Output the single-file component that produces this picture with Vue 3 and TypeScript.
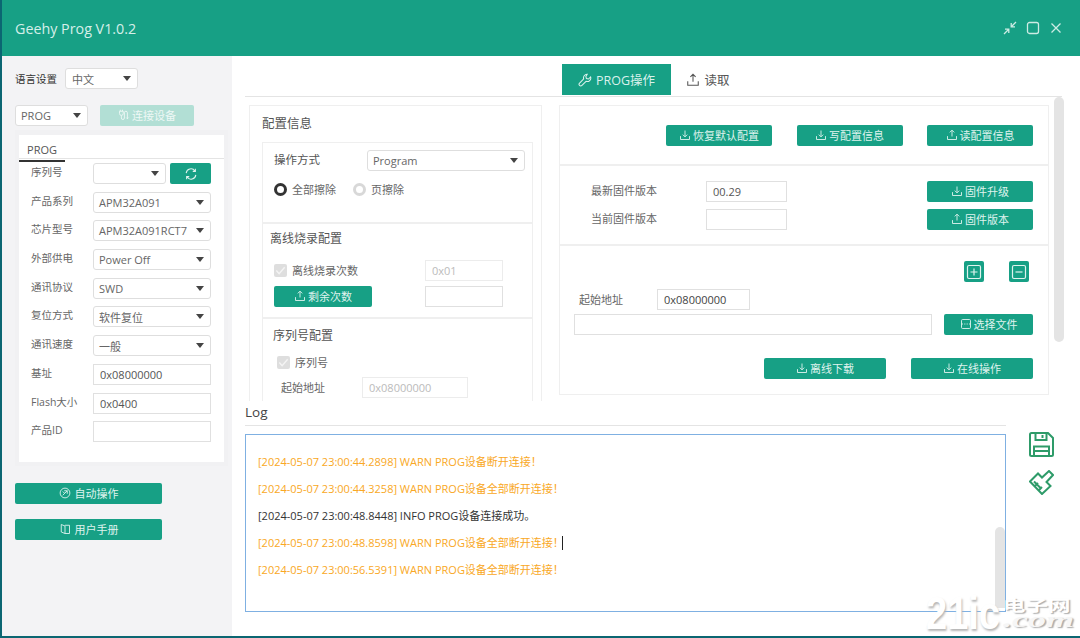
<script setup lang="ts">
const leftRows = [
  { label: '产品系列', value: 'APM32A091' },
  { label: '芯片型号', value: 'APM32A091RCT7' },
  { label: '外部供电', value: 'Power Off' },
  { label: '通讯协议', value: 'SWD' },
  { label: '复位方式', value: '软件复位' },
  { label: '通讯速度', value: '一般' },
]
const inputRows = [
  { label: '基址', value: '0x08000000' },
  { label: 'Flash大小', value: '0x0400' },
  { label: '产品ID', value: '' },
]
const logs = [
  { warn: true, text: '[2024-05-07 23:00:44.2898] WARN PROG设备断开连接！' },
  { warn: true, text: '[2024-05-07 23:00:44.3258] WARN PROG设备全部断开连接！' },
  { warn: false, text: '[2024-05-07 23:00:48.8448] INFO PROG设备连接成功。' },
  { warn: true, text: '[2024-05-07 23:00:48.8598] WARN PROG设备全部断开连接！', caret: true },
  { warn: true, text: '[2024-05-07 23:00:56.5391] WARN PROG设备全部断开连接！' },
]
</script>

<template>
  <div class="desk">
    <div class="win">
      <header class="titlebar">
        <span class="title">Geehy Prog V1.0.2</span>
        <div class="winctl">
          <svg width="14" height="14" viewBox="0 0 14 14"><path d="M13 1 8.5 5.5M8.2 2v3.800H12M1 13l4.500-4.500M5.800 12V8.200H2" /></svg>
          <svg width="14" height="14" viewBox="0 0 14 14"><rect x="1.500" y="1.500" width="11" height="11" rx="2" /></svg>
          <svg width="14" height="14" viewBox="0 0 14 14"><path d="M2.500 2.500l9 9M11.500 2.500l-9 9" /></svg>
        </div>
      </header>
      <div class="body">
        <aside class="side">
          <div class="langrow">
            <span class="langlabel">语言设置</span>
            <div class="sel lang"><span>中文</span><i class="arrow"></i></div>
          </div>
          <div class="devrow">
            <div class="sel dev"><span>PROG</span><i class="arrow"></i></div>
            <button class="btn connect">
              <svg class="ico" viewBox="0 0 16 16"><path d="M3 1v2M6 1v2M2 3h5v3a2.500 2.500 0 0 1-5 0zM4.500 8.500V12a2 2 0 0 0 4 0V5a2 2 0 0 1 4 0v8M12.500 13l-1.500-1.500M12.500 13l1.500-1.500" /></svg>
              连接设备
            </button>
          </div>
          <div class="progbox">
            <div class="progcard">
              <div class="progtabs"><span class="progtab">PROG</span></div>
              <div class="srow">
                <span class="slabel">序列号</span>
                <div class="sel short"><i class="arrow"></i></div>
                <button class="btn refresh">
                  <svg class="ico" viewBox="0 0 16 16"><path d="M2.500 7A5.500 5.500 0 0 1 12.500 4.500M13.500 9A5.500 5.500 0 0 1 3.500 11.500M13 2v3h-3M3 14v-3h3" /></svg>
                </button>
              </div>
              <div v-for="r in leftRows" :key="r.label" class="srow">
                <span class="slabel">{{ r.label }}</span>
                <div class="sel wide"><span>{{ r.value }}</span><i class="arrow"></i></div>
              </div>
              <div v-for="r in inputRows" :key="r.label" class="srow">
                <span class="slabel">{{ r.label }}</span>
                <div class="inp wide">{{ r.value }}</div>
              </div>
            </div>
          </div>
          <button class="btn sidebtn auto">
            <svg class="ico" viewBox="0 0 16 16"><circle cx="8" cy="8" r="6.500" /><path d="M5 11l6-6M7 5h4v4M5 6l2 2" /></svg>
            自动操作
          </button>
          <button class="btn sidebtn manual">
            <svg class="ico" viewBox="0 0 16 16"><path d="M8 4 3 2v10l5 2h6V3H8M8 4v10" /></svg>
            用户手册
          </button>
        </aside>
        <main class="main">
          <nav class="tabs">
            <div class="tab active">
              <svg class="ico tabico" viewBox="0 0 16 16"><path d="M10.500 1.500a4 4 0 0 0-4 5.300L1.800 11.500a1.900 1.900 0 0 0 2.700 2.700l4.700-4.700a4 4 0 0 0 5.200-5l-2.400 2.400-2.400-.6-.6-2.400z" /></svg>
              PROG操作
            </div>
            <div class="tab">
              <svg class="ico tabico" viewBox="0 0 16 16"><path d="M8 10V2M5 4.500 8 1.500l3 3M2 9.500V14h12V9.500" /></svg>
              读取
            </div>
          </nav>
          <div class="workarea">
            <section class="cfgcol">
              <div class="cfghead">配置信息</div>
              <div class="cfgbox first">
                <div class="oprow">
                  <span class="oplabel">操作方式</span>
                  <div class="sel program"><span>Program</span><i class="arrow"></i></div>
                </div>
                <div class="radios">
                  <span class="radio on"></span><span class="rtext">全部擦除</span>
                  <span class="radio off"></span><span class="rtext">页擦除</span>
                </div>
              </div>
              <div class="cfgbox second">
                <div class="subhead">离线烧录配置</div>
                <div class="offrow">
                  <span class="check"><svg viewBox="0 0 14 14"><path d="M2.500 7l3 3.500 6-7" /></svg></span>
                  <span class="rtext">离线烧录次数</span>
                  <div class="inp dim count">0x01</div>
                </div>
                <div class="offrow btnrow">
                  <button class="btn remain">
                    <svg class="ico" viewBox="0 0 16 16"><path d="M8 10V2M5 4.500 8 1.500l3 3M2 9.500V14h12V9.500" /></svg>
                    剩余次数
                  </button>
                  <div class="inp count"></div>
                </div>
              </div>
              <div class="cfgbox third">
                <div class="subhead indent">序列号配置</div>
                <div class="snrow">
                  <span class="check"><svg viewBox="0 0 14 14"><path d="M2.500 7l3 3.500 6-7" /></svg></span>
                  <span class="rtext">序列号</span>
                </div>
                <div class="startrow">
                  <span class="rtext">起始地址</span>
                  <div class="inp dim startinp">0x08000000</div>
                </div>
              </div>
            </section>
            <section class="opscol">
              <div class="opsblock a">
                <button class="btn b106">
                  <svg class="ico" viewBox="0 0 16 16"><path d="M8 2v8M5 7.500l3 3 3-3M2 9.500V14h12V9.500" /></svg>恢复默认配置
                </button>
                <button class="btn b106">
                  <svg class="ico" viewBox="0 0 16 16"><path d="M8 2v8M5 7.500l3 3 3-3M2 9.500V14h12V9.500" /></svg>写配置信息
                </button>
                <button class="btn b106">
                  <svg class="ico" viewBox="0 0 16 16"><path d="M8 10V2M5 4.500 8 1.500l3 3M2 9.500V14h12V9.500" /></svg>读配置信息
                </button>
              </div>
              <div class="opsblock b">
                <div class="fwrow">
                  <span class="fwlabel">最新固件版本</span>
                  <div class="inp fwinp">00.29</div>
                  <button class="btn b106 right">
                    <svg class="ico" viewBox="0 0 16 16"><path d="M8 2v8M5 7.500l3 3 3-3M2 9.500V14h12V9.500" /></svg>固件升级
                  </button>
                </div>
                <div class="fwrow">
                  <span class="fwlabel">当前固件版本</span>
                  <div class="inp fwinp"></div>
                  <button class="btn b106 right">
                    <svg class="ico" viewBox="0 0 16 16"><path d="M8 10V2M5 4.500 8 1.500l3 3M2 9.500V14h12V9.500" /></svg>固件版本
                  </button>
                </div>
              </div>
              <div class="opsblock c">
                <div class="pmrow">
                  <button class="btn square"><svg class="ico sq" viewBox="0 0 16 16"><rect x="1.500" y="1.500" width="13" height="13" rx="1.500" /><path d="M8 4.500v7M4.500 8h7" /></svg></button>
                  <button class="btn square"><svg class="ico sq" viewBox="0 0 16 16"><rect x="1.500" y="1.500" width="13" height="13" rx="1.500" /><path d="M4.500 8h7" /></svg></button>
                </div>
                <div class="addrrow">
                  <span class="addrlabel">起始地址</span>
                  <div class="inp addrinp">0x08000000</div>
                </div>
                <div class="filerow">
                  <div class="inp fileinp"></div>
                  <button class="btn filebtn">
                    <svg class="ico" viewBox="0 0 16 16"><rect x="2" y="2" width="12" height="12" rx="1.500" /><path d="M2 8h2M5.500 8h1M7.500 8h1M9.500 8h1M12 8h2" /></svg>选择文件
                  </button>
                </div>
                <div class="dlrow">
                  <button class="btn b122">
                    <svg class="ico" viewBox="0 0 16 16"><path d="M8 2v8M5 7.500l3 3 3-3M2 9.500V14h12V9.500" /></svg>离线下载
                  </button>
                  <button class="btn b122">
                    <svg class="ico" viewBox="0 0 16 16"><path d="M8 2v8M5 7.500l3 3 3-3M2 9.500V14h12V9.500" /></svg>在线操作
                  </button>
                </div>
              </div>
            </section>
            <div class="vscroll"></div>
          </div>
          <div class="loghead">Log</div>
          <div class="logarea">
            <div class="logbox">
              <div v-for="l in logs" :key="l.text" class="logline" :class="{ warn: l.warn }">{{ l.text }}<i v-if="l.caret" class="caret"></i></div>
              <div class="logscroll"></div>
            </div>
            <div class="logtools">
              <svg width="25" height="25" viewBox="0 0 25 25" class="tool"><path d="M2.500 1h16.500l5 5v16.500a1.500 1.500 0 0 1-1.500 1.500h-20A1.500 1.500 0 0 1 1 22.500V2.500A1.500 1.500 0 0 1 2.500 1zM6.500 1v7h11V1M13.500 3v3M5 24V14.500h15V24M5 19h15" /></svg>
              <svg width="25" height="25" viewBox="0 0 25 25" class="tool"><path d="M1 11.500 9 3.500 13 7.500 20 1 24 5 17.500 12 21.500 16 13 24zM5 11.500l7.500 7.500M6 16l3-3M10 20l3-3" /></svg>
            </div>
          </div>
          <div class="watermark">
            <span class="wm21">21ic</span>
            <span class="wmright"><span class="wmcn">电子网</span><span class="wmcom">.com</span></span>
          </div>
        </main>
      </div>
    </div>
  </div>
</template>

<style>
html, body { margin: 0; padding: 0; }
</style>

<style scoped>
.desk {
  width: 1080px;
  height: 638px;
  overflow: hidden;
  background: #0b6672;
  padding: 0 0 2px 2px;
  box-sizing: border-box;
  font-family: "Noto Sans CJK SC", "Open Sans", sans-serif;
  color: #555;
}
.win { width: 1078px; height: 636px; display: flex; flex-direction: column; background: #fff; }
.titlebar {
  flex: none;
  height: 56px;
  background: #17a085;
  display: flex;
  align-items: center;
  justify-content: space-between;
  padding: 0 17px 0 13px;
  box-sizing: border-box;
}
.title { font-family: "Open Sans", sans-serif; font-size: 14.3px; color: #d5efe9; }
.winctl { display: flex; gap: 9px; }
.winctl svg { fill: none; stroke: #cdebe4; stroke-width: 1.3; }
.body { flex: 1; display: flex; min-height: 0; }
.side { flex: none; width: 230px; background: #f3f3f5; padding: 12px 0 0 13px; box-sizing: border-box; }
.sel {
  box-sizing: border-box;
  height: 21px;
  background: #fff;
  border: 1px solid #dedede;
  border-radius: 3px;
  display: flex;
  align-items: center;
  padding: 0 6px 0 5px;
  font-size: 11px;
  font-family: "Open Sans", "Noto Sans CJK SC", sans-serif;
  color: #666;
}
.arrow { width: 0; height: 0; margin-left: auto; border-left: 4px solid transparent; border-right: 4px solid transparent; border-top: 5px solid #444; flex: none; }
.langrow { display: flex; align-items: center; height: 21px; gap: 8px; font-size: 10.5px; color: #333; }
.langlabel { width: 42px; white-space: nowrap; }
.lang { width: 73px; padding-left: 6px; }
.devrow { display: flex; gap: 12px; margin-top: 16px; align-items: center; }
.dev { width: 73px; }
.btn {
  border: 0;
  padding: 0 0 2px;
  margin: 0;
  height: 21px;
  box-sizing: border-box;
  border-radius: 2px;
  background: #17a085;
  color: #dff3ee;
  font-family: "Noto Sans CJK SC", sans-serif;
  font-size: 11px;
  display: flex;
  align-items: center;
  justify-content: center;
  gap: 2px;
  white-space: nowrap;
}
.ico { width: 12px; height: 12px; fill: none; stroke: currentColor; stroke-width: 1.2; flex: none; }
.connect { width: 94px; background: #b2dfd5; color: #eef8f6; }
.progbox { margin-top: 4px; width: 213px; padding: 4px; box-sizing: border-box; background: #f1f1f3; }
.progcard { background: #fff; height: 327px; margin-top: 1px; width: 205px; }
.progtabs { height: 24px; border-bottom: 1px solid #e4e4e4; box-sizing: border-box; margin-bottom: 4px; }
.progtab {
  display: inline-block;
  width: 46px;
  height: 24px;
  box-sizing: border-box;
  text-align: center;
  font-size: 11px;
  line-height: 23px;
  font-family: "Open Sans", sans-serif;
  color: #555;
  border-bottom: 2px solid #333;
}
.srow { display: flex; align-items: center; height: 21px; margin-bottom: 7.7px; padding-left: 12px; }
.slabel { width: 62px; font-size: 10.5px; color: #666; flex: none; position: relative; top: -2px; white-space: nowrap; font-family: "Open Sans", "Noto Sans CJK SC", sans-serif; }
.wide { width: 118px; }
.short { width: 73px; }
.refresh { width: 41px; margin-left: 4px; padding: 0; }
.refresh .ico { width: 14px; height: 14px; }
.inp {
  box-sizing: border-box;
  height: 21px;
  background: #fff;
  border: 1px solid #e0e0e0;
  padding: 0 6px;
  font-size: 11px;
  line-height: 19px;
  font-family: "Open Sans", sans-serif;
  color: #555;
}
.sidebtn { width: 147px; gap: 4px; }
.auto { margin-top: 17px; }
.manual { margin-top: 15px; }
.main { flex: 1; min-width: 0; position: relative; padding-left: 12px; display: flex; flex-direction: column; }
.tabs { height: 41px; width: 817px; margin-left: 1px; display: flex; box-sizing: border-box; border-bottom: 1px solid #e4e4e4; padding-left: 317px; align-items: flex-end; }
.tab { height: 31px; margin-bottom: 1px; display: flex; align-items: center; justify-content: center; gap: 4px; font-size: 12.5px; color: #555; font-family: "Open Sans", "Noto Sans CJK SC", sans-serif; width: 74px; }
.tab.active { width: 109px; background: #17a085; color: #d9f1ec; }
.tabico { width: 14px; height: 14px; }
.workarea { flex: none; height: 304px; position: relative; display: flex; overflow: hidden; width: 820px; }
.cfgcol { margin: 8px 0 0 5px; width: 293px; height: 400px; border: 1px solid #efefef; box-sizing: border-box; flex: none; }
.cfghead { height: 36px; padding: 7px 0 0 12px; box-sizing: border-box; font-size: 12.5px; color: #555; }
.cfgbox { margin-left: 12px; width: 271px; border: 1px solid #efefef; border-bottom-width: 2px; box-sizing: border-box; }
.first { height: 82px; padding: 7px 7px 0 11px; }
.oprow { display: flex; align-items: center; height: 21px; }
.oplabel { width: 93px; font-size: 11.5px; color: #555; position: relative; top: -2px; }
.program { width: 158px; }
.radios { display: flex; align-items: center; height: 21px; margin-top: 8px; }
.radio { width: 13px; height: 13px; box-sizing: border-box; border-radius: 50%; flex: none; margin-right: 5px; }
.on { border: 3.5px solid #333; background: #fff; }
.off { border: 3.5px solid #d8d8d8; background: #fff; margin-left: 17px; }
.rtext { font-size: 11px; color: #666; white-space: nowrap; position: relative; top: -1px; }
.second { height: 95px; padding: 5px 0 0 11px; border-top: 0; }
.subhead { font-size: 12px; color: #555; margin-left: -4px; height: 31px; line-height: 17px; }
.subhead.indent { margin-left: -1px; }
.offrow { display: flex; align-items: center; height: 21px; width: 229px; }
.check { width: 13px; height: 13px; background: #dedede; border-radius: 2px; display: inline-flex; flex: none; margin-right: 5px; }
.check svg { fill: none; stroke: #f4f4f4; stroke-width: 1.5; }
.count { width: 78px; margin-left: auto; }
.dim { color: #bbb; border-color: #ececec; }
.btnrow { margin-top: 5px; }
.remain { width: 98px; }
.third { height: 110px; padding: 7px 0 0 11px; border-top: 0; }
.third .subhead { height: 26px; }
.snrow { display: flex; align-items: center; height: 21px; padding-left: 3px; }
.startrow { display: flex; align-items: center; height: 21px; margin-top: 4px; padding-left: 7px; }
.startrow .rtext { width: 81px; }
.startinp { width: 106px; }
.opscol { margin: 8px 0 0 17px; width: 490px; height: 290px; flex: none; border: 1px solid #efefef; box-sizing: border-box; }
.opsblock { border-bottom: 2px solid #efefef; box-sizing: border-box; }
.a { height: 60px; display: flex; justify-content: flex-end; align-items: flex-start; gap: 24.5px; padding: 19px 15px 0 0; }
.b106 { width: 106px; }
.b { height: 80px; padding-top: 15px; }
.fwrow { display: flex; align-items: center; height: 21px; margin-bottom: 7px; padding: 0 15px 0 31px; }
.fwlabel { width: 115px; font-size: 11px; color: #666; position: relative; top: -2px; }
.fwinp { width: 81px; }
.right { margin-left: auto; }
.c { height: 148px; border-bottom: 0; padding: 15px 15px 0 0; }
.pmrow { display: flex; justify-content: flex-end; gap: 25px; padding-right: 4px; }
.square { width: 20px; height: 21px; padding: 0; }
.sq { width: 16px; height: 16px; }
.addrrow { display: flex; align-items: center; height: 21px; margin-top: 7px; padding-left: 19px; }
.addrlabel { width: 78px; font-size: 11px; color: #666; position: relative; top: -1px; }
.addrinp { width: 93px; color: #444; }
.filerow { display: flex; justify-content: space-between; margin-top: 4px; padding-left: 14px; }
.fileinp { width: 358px; }
.filebtn { width: 89px; }
.dlrow { display: flex; justify-content: flex-end; gap: 25px; margin-top: 23px; }
.b122 { width: 122px; }
.vscroll { position: absolute; left: 810px; top: 0; width: 10px; height: 245px; background: #e4e4e4; border-radius: 5px; }
.loghead { margin-left: 1px; width: 761px; height: 24px; border-bottom: 1px solid #e4e4e4; box-sizing: border-box; font-family: "Open Sans", sans-serif; font-size: 13.5px; line-height: 17px; color: #444; margin-top: 1px; padding-top: 2px; }
.logarea { display: flex; margin-top: 8px; }
.logbox {
  width: 761px;
  height: 178px;
  margin-left: 1px;
  border: 1px solid #7fb0e2;
  box-sizing: border-box;
  padding: 13px 0 0 12px;
  position: relative;
  flex: none;
}
.logline { height: 27px; line-height: 27px; font-family: "Open Sans", "Noto Sans CJK SC", sans-serif; font-size: 11px; color: #333; white-space: nowrap; }
.warn { color: #f9a825; }
.caret { display: inline-block; width: 1px; height: 14px; background: #222; margin-left: -2px; vertical-align: -3px; }
.logscroll { position: absolute; right: 0; top: 92px; width: 10px; height: 81px; background: #e4e4e4; border-radius: 5px 5px 0 0; }
.logtools { display: flex; flex-direction: column; gap: 13px; margin: -2px 0 0 23px; }
.tool { fill: none; stroke: #2e9b69; stroke-width: 2; }
.watermark { position: absolute; right: 7px; bottom: 5px; height: 33px; display: flex; align-items: flex-start; pointer-events: none; }
.wm21 {
  width: 77px;
  font-family: "Liberation Sans", sans-serif;
  font-weight: 700;
  font-size: 38px;
  line-height: 30px;
  color: #fff;
  text-shadow: 1px 2px 2px #b5b5b5;
  transform: scaleY(1.2);
  transform-origin: center center;
}
.wmright { display: flex; flex-direction: column; width: 70px; }
.wmcn {
  font-size: 15px;
  line-height: 14px;
  height: 14px;
  font-weight: 700;
  color: #fff;
  text-shadow: 1px 1px 1px #aaa;
  transform: scaleX(1.5);
  transform-origin: left center;
  white-space: nowrap;
}
.wmcom {
  font-family: "Liberation Serif", serif;
  font-style: italic;
  font-weight: 700;
  font-size: 20px;
  line-height: 17px;
  height: 17px;
  color: #f6f6f6;
  text-shadow: 1px 1px 1px #aaa;
  transform: scaleX(1.8);
  transform-origin: left center;
}
</style>
